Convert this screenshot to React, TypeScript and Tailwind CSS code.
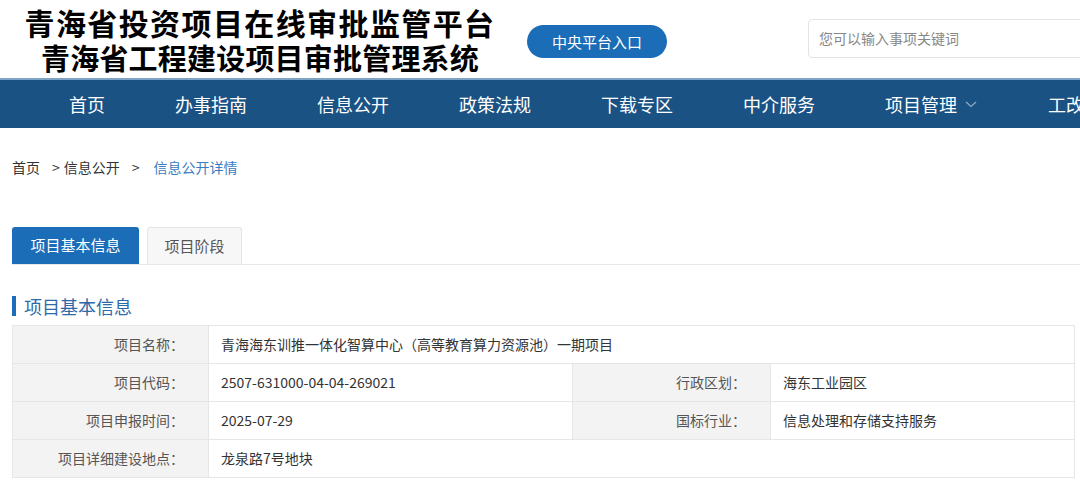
import React from 'react';

const font = { fontFamily: '"Microsoft YaHei", "Noto Sans CJK SC", "Noto Sans", sans-serif' };

const navItems = ['首页', '办事指南', '信息公开', '政策法规', '下载专区', '中介服务', '项目管理', '工改系统'];

const Header: React.FC = () => (
  <div className="h-[78px] bg-white flex items-start whitespace-nowrap">
    <div className="w-[520px] shrink-0 flex flex-col items-center pt-[5px] text-black font-bold">
      <div className="text-[30px] leading-[35px] tracking-[1.4px]">青海省投资项目在线审批监管平台</div>
      <div className="text-[29px] leading-[35px] tracking-[0.2px]">青海省工程建设项目审批管理系统</div>
    </div>
    <button className="shrink-0 ml-[7px] mt-[25px] w-[140px] h-[33px] rounded-full bg-[#1a6db6] text-white text-[15px] leading-[33px]">
      中央平台入口
    </button>
    <div className="shrink-0 ml-[141px] mt-[19px] w-[300px] h-[39px] border border-[#e3e3e3] rounded-[4px] flex items-center px-[10px] text-[14px] text-[#888]">
      您可以输入事项关键词
    </div>
  </div>
);

const Nav: React.FC = () => (
  <div className="h-[50px] bg-[#1b5284] border-t-2 border-[#7fa3c4] flex items-center pl-[69px] gap-[70px] whitespace-nowrap text-white text-[18px]">
    {navItems.map((n) => (
      <div key={n} className="flex items-center shrink-0">
        <span>{n}</span>
        {n === '项目管理' && (
          <svg width="14" height="10" viewBox="0 0 14 10" className="ml-[7px]">
            <path d="M2 3 L7 7.5 L12 3" fill="none" stroke="#8fa9c4" strokeWidth="1.3" />
          </svg>
        )}
      </div>
    ))}
  </div>
);

const Label: React.FC<{ children: React.ReactNode }> = ({ children }) => (
  <td className="bg-[#f3f3f3] text-right pr-[24px] text-[#555] border border-[#e6e6e6] h-[38px]">{children}</td>
);
const Value: React.FC<{ children?: React.ReactNode; colSpan?: number }> = ({ children, colSpan }) => (
  <td colSpan={colSpan} className="pl-[12px] text-[#333] border border-[#e6e6e6] h-[38px]">{children}</td>
);

export default function App() {
  return (
    <div className="w-[1080px] h-[484px] overflow-hidden bg-white" style={font}>
      <Header />
      <Nav />
      <div className="px-[12px] pt-[29px] text-[14px] text-[#333] flex items-center">
        <span>首页</span>
        <span className="ml-[12px]">&gt;</span>
        <span className="ml-[4px]">信息公开</span>
        <span className="ml-[12px]">&gt;</span>
        <span className="ml-[14px] text-[#3a7cc0]">信息公开详情</span>
      </div>
      <div className="mt-[49px] ml-[12px] flex items-end gap-[8px] border-b border-[#e8e8e8] h-[38px]">
        <div className="w-[127px] h-[37px] rounded-t-[3px] bg-[#1a6db6] text-white text-[15px] flex items-center justify-center">
          项目基本信息
        </div>
        <div className="w-[95px] h-[37px] rounded-t-[3px] bg-[#f7f7f7] border border-b-0 border-[#e5e5e5] text-[#555] text-[15px] flex items-center justify-center">
          项目阶段
        </div>
      </div>
      <div className="mt-[31px] ml-[12px] flex items-center h-[20px]">
        <div className="w-[4px] h-[20px] bg-[#1a6db6]" />
        <span className="ml-[8px] text-[18px] text-[#2e6aa8]">项目基本信息</span>
      </div>
      <table className="mt-[9px] ml-[12px] w-[1063px] border-collapse text-[14px] table-fixed">
        <colgroup>
          <col className="w-[196px]" />
          <col className="w-[364px]" />
          <col className="w-[198px]" />
          <col />
        </colgroup>
        <tbody>
          <tr>
            <Label>项目名称：</Label>
            <Value colSpan={3}>青海海东训推一体化智算中心（高等教育算力资源池）一期项目</Value>
          </tr>
          <tr>
            <Label>项目代码：</Label>
            <Value>2507-631000-04-04-269021</Value>
            <Label>行政区划：</Label>
            <Value>海东工业园区</Value>
          </tr>
          <tr>
            <Label>项目申报时间：</Label>
            <Value>2025-07-29</Value>
            <Label>国标行业：</Label>
            <Value>信息处理和存储支持服务</Value>
          </tr>
          <tr>
            <Label>项目详细建设地点：</Label>
            <Value colSpan={3}>龙泉路7号地块</Value>
          </tr>
        </tbody>
      </table>
    </div>
  );
}
